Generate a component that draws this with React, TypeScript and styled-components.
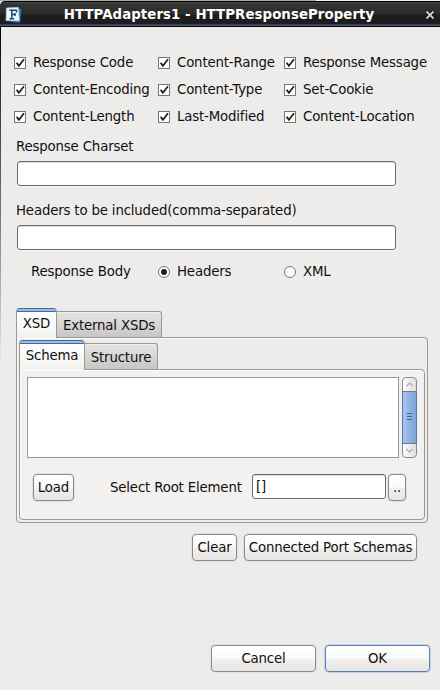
import React from "react";
import styled, { createGlobalStyle, css } from "styled-components";

const GlobalStyle = createGlobalStyle`
  *, *::before, *::after { box-sizing: border-box; }
  html, body { margin: 0; padding: 0; }
  body { background: #edeceb; overflow: hidden; }
  body, button, input, textarea {
    font-family: "DejaVu Sans", Verdana, sans-serif;
    font-size: 13.33px;
    letter-spacing: -0.17px;
    color: #101010;
  }
`;

const Window = styled.div`
  width: 440px;
  height: 690px;
  display: flex;
  flex-direction: column;
  background: #edeceb;
`;

const Desktop = styled.div`
  height: 1px;
  flex: none;
  background: linear-gradient(90deg, #a9aca2 316px, #f4f4f4 316px);
`;

const TitleBar = styled.header`
  height: 26px;
  flex: none;
  display: grid;
  grid-template-columns: 20px 1fr 22px;
  align-items: center;
  border-top: 1px solid #000;
  border-bottom: 1px solid #000;
  border-top-left-radius: 5px;
  background: linear-gradient(#4a4a4a 0, #343434 2px, #2b2b2b 12px, #1c1c1c 13px, #1e1e1e 22px, #4a5a7c 23px, #4a5a7c 24px);
`;

const Title = styled.h1`
  margin: 0;
  padding-top: 2px;
  text-align: center;
  font-size: 13.33px;
  letter-spacing: 0.07px;
  line-height: 22px;
  font-weight: bold;
  color: #fff;
  white-space: nowrap;
`;

const AppIcon = styled.svg`
  width: 18px;
  height: 18px;
  margin: 2px 0 0 5px;
`;

const CloseIcon = styled.svg`
  width: 10px;
  height: 10px;
  margin: 2px 0 0 7px;
`;

const Content = styled.main`
  flex: 1;
  position: relative;
  padding: 22px 0 0 16px;
  &::before {
    content: "";
    position: absolute;
    left: 0;
    top: 0;
    width: 1px;
    height: 340px;
    background: linear-gradient(#000, #333 20%, #777 55%, #edeceb);
  }
`;

const OptionGrid = styled.div`
  display: grid;
  grid-template-columns: 144px 126px 150px;
  grid-auto-rows: 27px;
  margin-left: -2px;
`;

const Option = styled.label`
  display: flex;
  align-items: center;
  white-space: nowrap;
  gap: 7px;
`;

const CheckMark = styled.svg`
  width: 12px;
  height: 12px;
  flex: none;
  overflow: visible;
  margin-top: 1px;
`;

const Caption = styled.div<{ $gap?: number }>`
  height: 20px;
  line-height: 20px;
  margin-top: ${(p) => p.$gap ?? 0}px;
  white-space: nowrap;
`;

const TextField = styled.input<{ $width: number }>`
  display: block;
  width: ${(p) => p.$width}px;
  height: 25px;
  padding: 0 3px;
  border: 1px solid #6c6b69;
  border-radius: 3px;
  background: #fff;
  outline: none;
  box-shadow: inset 0 1px 0 #dddcdb, 0 1px 0 #f8f8f7;
`;

const FieldSlot = styled.div`
  padding: 4px 0 0 1px;
`;

const RadioRow = styled.div`
  display: grid;
  grid-template-columns: 127px 126px 150px;
  align-items: center;
  height: 22px;
  margin: 10px 0 0 15px;
`;

const Tabs = styled.div`
  display: flex;
  align-items: flex-end;
  height: 30px;
  position: relative;
  z-index: 1;
`;

const OuterTabs = styled(Tabs)`
  margin-top: 26px;
`;

const Tab = styled.button<{ $active?: boolean; $width: number }>`
  width: ${(p) => p.$width}px;
  height: 26px;
  padding: 2px 0 0;
  line-height: 16px;
  white-space: nowrap;
  border: 1px solid #9a9896;
  border-left: 0;
  border-bottom: 0;
  border-radius: 0 3px 0 0;
  background: linear-gradient(#e6e5e4, #c7c6c4);
  box-shadow: inset 0 1px 0 #f0efee;
  margin-bottom: 1px;
  ${(p) =>
    p.$active &&
    css`
      height: 30px;
      padding: 0;
      margin-bottom: 0;
      border-left: 1px solid #9a9896;
      border-top: 1px solid #47699c;
      border-radius: 4px 4px 0 0;
      background: linear-gradient(#a2c0ec 0, #8fb4e6 2px, #47699c 2px, #47699c 3px, #fff 3px, #f2f1f0);
      box-shadow: none;
    `}
`;

const OuterPanel = styled.section`
  width: 412px;
  height: 186px;
  margin-top: -1px;
  padding: 2px;
  border: 1px solid #9a9896;
  border-radius: 0 4px 4px 4px;
  box-shadow: inset 1px 1px 0 #fafafa;
`;

const InnerPanel = styled.section`
  width: 406px;
  height: 151px;
  margin-top: -1px;
  padding: 7px;
  border: 1px solid #9a9896;
  border-radius: 0 4px 4px 4px;
  background: #f2f1f0;
  box-shadow: inset 1px 1px 0 #fff;
`;

const SchemaArea = styled.div`
  display: flex;
  gap: 3px;
  height: 81px;
`;

const SchemaText = styled.textarea`
  width: 372px;
  height: 81px;
  margin: 0;
  border: 1px solid #9a9896;
  border-radius: 0;
  background: #fff;
  resize: none;
  outline: none;
  overflow: hidden;
`;

const ScrollBar = styled.svg`
  width: 15px;
  height: 81px;
`;

const RootRow = styled.div`
  display: flex;
  align-items: flex-start;
  padding: 16px 0 0 6px;
`;

const RootLabel = styled.span`
  width: 142px;
  margin-left: 36px;
  line-height: 27px;
  white-space: nowrap;
`;

const Button = styled.button<{ $width: number; $primary?: boolean }>`
  width: ${(p) => p.$width}px;
  height: 27px;
  padding: 0;
  line-height: 24px;
  white-space: nowrap;
  border: 1px solid ${(p) => (p.$primary ? "#5f82b2" : "#8b8a88")};
  border-radius: 4px;
  background: linear-gradient(#fff, #f9f9f9 50%, #f0efee 52%, #e7e6e4);
  box-shadow: 0 0 0 1px ${(p) => (p.$primary ? "#bdd2ee" : "#e2e1df")};
`;

const BrowseButton = styled(Button)`
  margin-left: 2px;
`;

const ActionRow = styled.div<{ $top: number; $gap: number; $right: number }>`
  display: flex;
  justify-content: flex-end;
  gap: ${(p) => p.$gap}px;
  margin-top: ${(p) => p.$top}px;
  padding-right: ${(p) => p.$right}px;
`;

const options = [
  "Response Code",
  "Content-Range",
  "Response Message",
  "Content-Encoding",
  "Content-Type",
  "Set-Cookie",
  "Content-Length",
  "Last-Modified",
  "Content-Location",
];

function Check() {
  return (
    <CheckMark viewBox="0 0 12 12">
      <rect x=".5" y=".5" width="11" height="11" fill="#fff" stroke="#777674" />
      <path d="M2.6 5.7 4.9 8.8 10 2.2" fill="none" stroke="#1c1c1c" strokeWidth="1.7" />
    </CheckMark>
  );
}

function Radio({ on }: { on?: boolean }) {
  return (
    <CheckMark viewBox="0 0 12 12">
      <circle cx="6" cy="6" r="5.5" fill="#fff" stroke="#777674" />
      {on && <circle cx="6" cy="6" r="3" fill="#1c1c1c" />}
    </CheckMark>
  );
}

export default function App() {
  return (
    <Window>
      <GlobalStyle />
      <Desktop />
      <TitleBar>
        <AppIcon viewBox="0 0 18 18">
          <path d="M4 1.5 16.5 3 15 17 5 15.5Z" fill="#1d75b5" />
          <path d="M1.5 2 13.5 1.4 14.3 14.8 1 14.6Z" fill="#eef8fd" stroke="#9bd0ec" strokeWidth=".8" />
          <path d="M4.5 4.2H11.5V6.5M6.8 4.2V12.7M4.5 12.7H9.2M6.6 8.4H10M10 7V10" fill="none" stroke="#174a70" strokeWidth="1.5" />
        </AppIcon>
        <Title>HTTPAdapters1 - HTTPResponseProperty</Title>
        <CloseIcon viewBox="0 0 10 10">
          <path d="M1.5 1.5 8.5 8.5M8.5 1.5 1.5 8.5" stroke="#000" strokeWidth="3.4" />
          <path d="M1.5 1.5 8.5 8.5M8.5 1.5 1.5 8.5" stroke="#d0d0d0" strokeWidth="1.9" />
        </CloseIcon>
      </TitleBar>
      <Content>
        <OptionGrid>
          {options.map((name) => (
            <Option key={name}>
              <Check />
              {name}
            </Option>
          ))}
        </OptionGrid>
        <Caption $gap={7}>Response Charset</Caption>
        <FieldSlot>
          <TextField $width={379} />
        </FieldSlot>
        <Caption $gap={15}>Headers to be included(comma-separated)</Caption>
        <FieldSlot>
          <TextField $width={379} />
        </FieldSlot>
        <RadioRow>
          <span>Response Body</span>
          <Option>
            <Radio on />
            Headers
          </Option>
          <Option>
            <Radio />
            XML
          </Option>
        </RadioRow>
        <OuterTabs>
          <Tab $active $width={41}>XSD</Tab>
          <Tab $width={105}>External XSDs</Tab>
        </OuterTabs>
        <OuterPanel>
          <Tabs>
            <Tab $active $width={66}>Schema</Tab>
            <Tab $width={73}>Structure</Tab>
          </Tabs>
          <InnerPanel>
            <SchemaArea>
              <SchemaText />
              <ScrollBar viewBox="0 0 15 81">
                <defs>
                  <linearGradient id="thumb">
                    <stop offset="0" stopColor="#a8c5ec" />
                    <stop offset="1" stopColor="#7da3d8" />
                  </linearGradient>
                  <linearGradient id="stepper">
                    <stop offset="0" stopColor="#fdfdfd" />
                    <stop offset="1" stopColor="#deddda" />
                  </linearGradient>
                </defs>
                <rect x=".5" y=".5" width="14" height="80" rx="3.5" fill="url(#stepper)" stroke="#8b8a88" />
                <rect x=".5" y="14.5" width="14" height="52" fill="url(#thumb)" stroke="#5179b2" />
                <path d="M.5 14.5H14.5M.5 66.5H14.5" stroke="#77797c" />
                <path d="M5 36.5H10M5 39.5H10M5 42.5H10" stroke="#3f6499" />
                <path d="M4.5 9 7.5 6 10.5 9M4.5 72 7.5 75 10.5 72" fill="none" stroke="#b0afad" strokeWidth="1.3" />
              </ScrollBar>
            </SchemaArea>
            <RootRow>
              <Button $width={41}>Load</Button>
              <RootLabel>Select Root Element</RootLabel>
              <TextField $width={134} defaultValue="[]" />
              <BrowseButton $width={18}>..</BrowseButton>
            </RootRow>
          </InnerPanel>
        </OuterPanel>
        <ActionRow $top={11} $gap={7} $right={23}>
          <Button $width={45}>Clear</Button>
          <Button $width={173}>Connected Port Schemas</Button>
        </ActionRow>
        <ActionRow $top={84} $gap={9} $right={10}>
          <Button $width={105}>Cancel</Button>
          <Button $width={105} $primary>OK</Button>
        </ActionRow>
      </Content>
    </Window>
  );
}
